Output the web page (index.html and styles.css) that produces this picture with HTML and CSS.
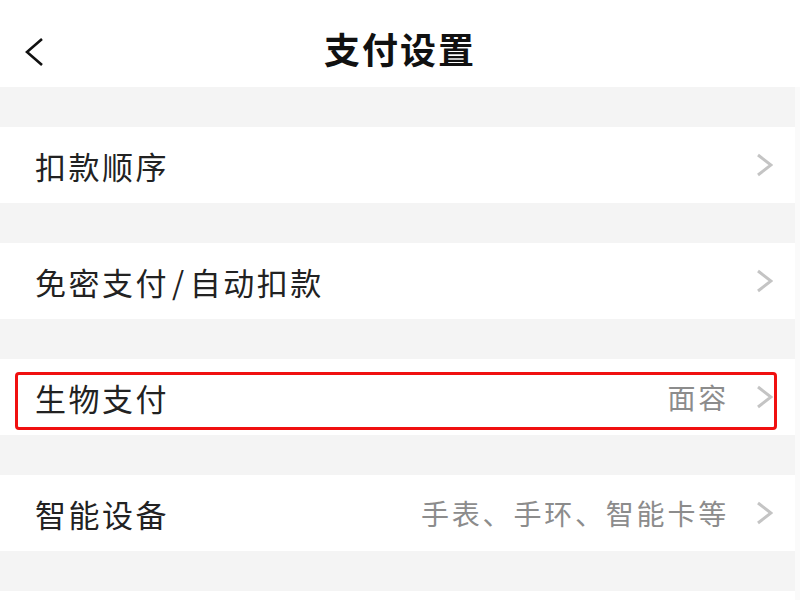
FILE: index.html
```html
<!DOCTYPE html>
<html lang="zh-CN">
<head>
  <meta charset="UTF-8">
  <title>支付设置</title>
  <link rel="stylesheet" href="styles.css">
</head>
<body>

<header class="topbar">
  <a class="back" href="#">
    <svg width="22" height="30" viewBox="0 0 22 30">
      <path d="M19 2 L4 15 L19 28" fill="none" stroke="#111" stroke-width="2.6"/>
    </svg>
  </a>
  <h1>支付设置</h1>
</header>

<main class="settings">
  <div class="gap"></div>
  <div class="row">
    <span class="label">扣款顺序</span>
    <svg class="arrow" width="17" height="24" viewBox="0 0 17 24"><path d="M2 2 L15 12 L2 22" fill="none" stroke="#c4c4c4" stroke-width="3"/></svg>
  </div>

  <div class="gap"></div>
  <div class="row">
    <span class="label">免密支付<span class="slash">/</span>自动扣款</span>
    <svg class="arrow" width="17" height="24" viewBox="0 0 17 24"><path d="M2 2 L15 12 L2 22" fill="none" stroke="#c4c4c4" stroke-width="3"/></svg>
  </div>

  <div class="gap"></div>
  <div class="row marked">
    <span class="label">生物支付</span>
    <span class="value">面容</span>
    <svg class="arrow" width="17" height="24" viewBox="0 0 17 24"><path d="M2 2 L15 12 L2 22" fill="none" stroke="#c4c4c4" stroke-width="3"/></svg>
  </div>

  <div class="gap"></div>
  <div class="row">
    <span class="label">智能设备</span>
    <span class="value">手表、手环、智能卡等</span>
    <svg class="arrow" width="17" height="24" viewBox="0 0 17 24"><path d="M2 2 L15 12 L2 22" fill="none" stroke="#c4c4c4" stroke-width="3"/></svg>
  </div>

  <div class="gap"></div>
  <div class="row"></div>
</main>

</body>
</html>
```

FILE: styles.css
```css
body {
  margin: 0;
  height: 600px;
  background: #fafafa;
  font-family: "Noto Sans CJK SC", "Noto Sans", sans-serif;
  color: #222;
  overflow: hidden;
}

.topbar {
  height: 87px;
  box-sizing: border-box;
  padding-top: 8px;
  background: #fff;
  display: flex;
  align-items: center;
  justify-content: center;
  position: relative;
}
.topbar h1 {
  margin: 0;
  font-size: 36px;
  font-weight: 700;
  color: #111;
  letter-spacing: 2px;
}
.back {
  position: absolute;
  left: 23px;
  top: 37px;
  display: block;
}

.settings {
  margin-right: 5px;
}
.gap {
  height: 40px;
  background: #f4f4f4;
}
.row {
  height: 76px;
  background: #fff;
  display: flex;
  align-items: center;
  padding: 0 22px 0 35px;
  position: relative;
}
.label {
  font-size: 31px;
  letter-spacing: 2.5px;
  color: #222;
  flex: 1;
}
.slash {
  margin: 0 3px;
}
.value {
  font-size: 28px;
  letter-spacing: 2.8px;
  color: #8c8c8c;
  margin-right: 27px;
}
.arrow {
  display: block;
}

/* red highlight annotation */
.marked::after {
  content: "";
  position: absolute;
  left: 15px;
  right: 18px;
  top: 13px;
  bottom: 5px;
  border: 3px solid #f01010;
  border-radius: 4px;
}
```
